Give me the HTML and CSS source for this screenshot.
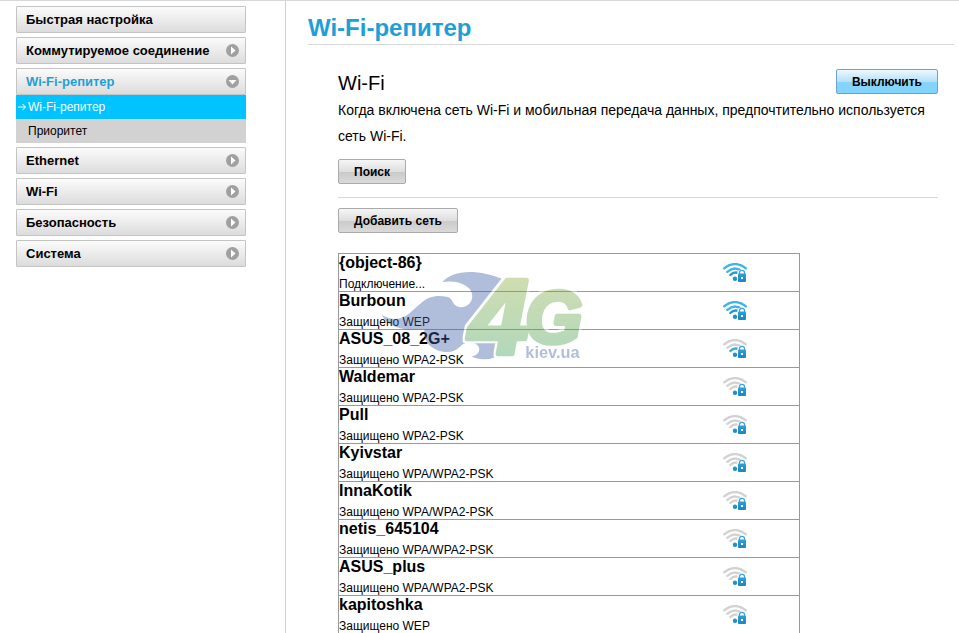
FILE: index.html
```html
<!DOCTYPE html>
<html lang="ru">
<head>
  <meta charset="UTF-8">
  <title>Wi-Fi-репитер</title>
  <link rel="stylesheet" href="styles.css">
</head>
<body>

  <!-- shared icons -->
  <svg class="sprite" width="0" height="0" aria-hidden="true">
    <defs>
      <linearGradient id="blue" gradientUnits="userSpaceOnUse" x1="0" y1="0" x2="0" y2="20">
        <stop offset="0" stop-color="#4fc0f0"/>
        <stop offset="1" stop-color="#1583c0"/>
      </linearGradient>
    </defs>
    <symbol id="arrow-right" viewBox="0 0 13 13">
      <circle cx="6.5" cy="6.5" r="6.5" fill="#a0a0a0"/>
      <path d="M5 2.5v8L9.500 6.5z" fill="#fff"/>
    </symbol>
    <symbol id="arrow-down" viewBox="0 0 13 13">
      <circle cx="6.5" cy="6.5" r="6.5" fill="#a0a0a0"/>
      <path d="M2.5 5h8L6.5 9.500z" fill="#fff"/>
    </symbol>
    <symbol id="signal" viewBox="0 0 24 20">
      <path class="arc arc-3" d="M1.3 5.200Q12 -3 22.7 5.200"/>
      <path class="arc arc-2" d="M4.300 8.800Q12 2.400 19.700 8.800"/>
      <path class="arc arc-1" d="M7.300 12Q11.500 7.800 16.500 10.500"/>
      <circle cx="12" cy="15.700" r="2.200" fill="url(#blue)"/>
      <path d="M14.300 11V10a4.700 3.500 0 0 1 9.400 0V20H14.300z" fill="#fff"/>
      <path d="M16.400 12V10a2.600 2.600 0 0 1 5.200 0V12" fill="none" stroke="#3aa5dc" stroke-width="1.200"/>
      <rect x="15" y="10.500" width="8" height="8.500" rx="1" fill="url(#blue)"/>
      <rect x="18" y="14" width="2" height="2" fill="#fff"/>
    </symbol>
  </svg>

  <div class="page">
    <nav class="sidebar">
      <a class="menu-item" href="#">Быстрая настройка</a>
      <a class="menu-item" href="#">Коммутируемое соединение <svg><use href="#arrow-right"/></svg></a>
      <div class="menu-group">
        <a class="menu-item open" href="#">Wi-Fi-репитер <svg><use href="#arrow-down"/></svg></a>
        <a class="submenu-item active" href="#"><svg viewBox="0 0 9 8"><path d="M0 4h7.500M4.500 1l3 3-3 3" fill="none" stroke="#fff"/></svg>Wi-Fi-репитер</a>
        <a class="submenu-item" href="#">Приоритет</a>
      </div>
      <a class="menu-item" href="#">Ethernet <svg><use href="#arrow-right"/></svg></a>
      <a class="menu-item" href="#">Wi-Fi <svg><use href="#arrow-right"/></svg></a>
      <a class="menu-item" href="#">Безопасность <svg><use href="#arrow-right"/></svg></a>
      <a class="menu-item" href="#">Система <svg><use href="#arrow-right"/></svg></a>
    </nav>

    <main class="content">
      <h1>Wi-Fi-репитер</h1>

      <section class="panel">
        <div class="panel-head">
          <h2>Wi-Fi</h2>
          <button class="btn btn-blue" type="button">Выключить</button>
        </div>
        <p>Когда включена сеть Wi-Fi и мобильная передача данных, предпочтительно используется сеть Wi-Fi.</p>
        <button class="btn" type="button">Поиск</button>
        <hr>
        <button class="btn" type="button">Добавить сеть</button>

        <div class="networks-wrap">
          <table class="networks">
            <tbody>
              <tr>
                <td><strong>{object-86}</strong><span>Подключение...</span></td>
                <td class="level level-3"><svg><use href="#signal"/></svg></td>
              </tr>
              <tr>
                <td><strong>Burboun</strong><span>Защищено WEP</span></td>
                <td class="level level-3"><svg><use href="#signal"/></svg></td>
              </tr>
              <tr>
                <td><strong>ASUS_08_2G+</strong><span>Защищено WPA2-PSK</span></td>
                <td class="level level-1"><svg><use href="#signal"/></svg></td>
              </tr>
              <tr>
                <td><strong>Waldemar</strong><span>Защищено WPA2-PSK</span></td>
                <td class="level"><svg><use href="#signal"/></svg></td>
              </tr>
              <tr>
                <td><strong>Pull</strong><span>Защищено WPA2-PSK</span></td>
                <td class="level"><svg><use href="#signal"/></svg></td>
              </tr>
              <tr>
                <td><strong>Kyivstar</strong><span>Защищено WPA/WPA2-PSK</span></td>
                <td class="level"><svg><use href="#signal"/></svg></td>
              </tr>
              <tr>
                <td><strong>InnaKotik</strong><span>Защищено WPA/WPA2-PSK</span></td>
                <td class="level"><svg><use href="#signal"/></svg></td>
              </tr>
              <tr>
                <td><strong>netis_645104</strong><span>Защищено WPA/WPA2-PSK</span></td>
                <td class="level"><svg><use href="#signal"/></svg></td>
              </tr>
              <tr>
                <td><strong>ASUS_plus</strong><span>Защищено WPA/WPA2-PSK</span></td>
                <td class="level"><svg><use href="#signal"/></svg></td>
              </tr>
              <tr>
                <td><strong>kapitoshka</strong><span>Защищено WEP</span></td>
                <td class="level"><svg><use href="#signal"/></svg></td>
              </tr>
            </tbody>
          </table>

          <svg class="watermark" viewBox="150 210 618 288">
            <defs>
              <linearGradient id="leaf" gradientUnits="userSpaceOnUse" x1="0" y1="235" x2="0" y2="470">
                <stop offset="0" stop-color="#8aac3e"/>
                <stop offset="1" stop-color="#3ea058"/>
              </linearGradient>
              <!-- white edge round the digits -->
              <filter id="edge" color-interpolation-filters="sRGB">
                <feMorphology in="SourceAlpha" operator="dilate" radius="6" result="fat"/>
                <feFlood flood-color="#fff"/>
                <feComposite in2="fat" operator="in" result="border"/>
                <feMerge>
                  <feMergeNode in="border"/>
                  <feMergeNode in="SourceGraphic"/>
                </feMerge>
              </filter>
            </defs>
            <path fill="#3e5fa8" d="M337 246C370 210 440 205 525 240L500 340L420 365C408 385 410 410 435 418L512 425C518 465 490 492 424 470C455 466 458 430 420 427C390 425 390 460 343 456C300 450 280 425 283 388C235 392 180 390 155 345C215 378 240 335 270 312C295 288 320 285 350 290C370 292 365 318 390 322C425 322 435 290 420 268C405 250 375 240 337 246Z"/>
            <g filter="url(#edge)">
              <text class="mark" x="416" y="463" font-size="325">4</text>
              <text class="mark" x="586" y="430" font-size="220">G</text>
            </g>
            <text class="mark-site" x="586" y="474" font-size="49">kiev.ua</text>
          </svg>
        </div>
      </section>
    </main>
  </div>

</body>
</html>
```
FILE: styles.css
```css
body {
  margin: 0;
  font-family: "Liberation Sans", Arial, sans-serif;
  background: #fff;
  color: #000;
  border-top: 1px solid #d7d7dc;
  height: 100vh;
  box-sizing: border-box;
  overflow: hidden;
}

.sprite {
  position: absolute;
}

.page {
  display: flex;
  height: 100%;
}

/* left menu */
.sidebar {
  flex: none;
  width: 230px;
  padding: 5px 39px 0 16px;
  border-right: 1px solid #d0d0d0;
  display: flex;
  flex-direction: column;
  gap: 4px;
}

.menu-item {
  display: flex;
  align-items: center;
  justify-content: space-between;
  height: 25px;
  padding: 0 6px 0 9px;
  border: 1px solid #c4c4c4;
  border-radius: 1px;
  background: linear-gradient(#fbfbfb, #dcdcdc);
  color: #000;
  font-size: 13px;
  font-weight: bold;
  text-decoration: none;
}

.menu-item.open {
  color: #1ea0d7;
}

.menu-item svg {
  width: 13px;
  height: 13px;
}

.submenu-item {
  display: flex;
  align-items: center;
  height: 24px;
  padding-left: 12px;
  background: #d2d2d2;
  color: #000;
  font-size: 12px;
  text-decoration: none;
}

.submenu-item.active {
  padding-left: 2px;
  background: #00c3ff;
  color: #fff;
}

.submenu-item svg {
  width: 9px;
  height: 8px;
  margin-right: 1px;
}

/* main column */
.content {
  flex: 1;
  min-width: 0;
  padding: 11px 5px 0 22px;
}

h1 {
  margin: 0;
  padding-bottom: 1px;
  border-bottom: 1px solid #d7d7d7;
  color: #1ea0d7;
  font-size: 24px;
  line-height: 31px;
}

.panel {
  padding: 24px 16px 0 30px;
}

.panel-head {
  display: flex;
  align-items: flex-start;
  justify-content: space-between;
}

h2 {
  margin: 0;
  font-size: 20px;
  font-weight: normal;
  line-height: 28px;
}

p {
  margin: 0 0 10px;
  font-size: 14px;
  line-height: 26px;
}

hr {
  margin: 13px 0 10px;
  border: 0;
  border-top: 1px solid #d7d7d7;
}

.btn {
  display: block;
  height: 25px;
  padding: 0 15px;
  border: 1px solid #aaa;
  border-radius: 2px;
  background: linear-gradient(#f6f6f6, #dedede 50%, #cacaca 52%, #dadada);
  color: #000;
  font-family: inherit;
  font-size: 12px;
  font-weight: bold;
}

.btn-blue {
  border-color: #6aa5d2;
  background: linear-gradient(#eef8fe, #b4e0f8 50%, #86d4fa 52%, #80d4fc);
}

/* network list */
.networks-wrap {
  position: relative;
  margin-top: 20px;
}

.networks {
  width: 77%;
  border-collapse: collapse;
}

.networks td {
  height: 37px;
  padding: 0;
  border-top: 1px solid #999;
  border-bottom: 1px solid #999;
}

.networks td:first-child {
  border-left: 1px solid #999;
}

.networks td:last-child {
  border-right: 1px solid #999;
}

.networks strong {
  display: block;
  font-size: 16px;
  line-height: 18px;
}

.networks span {
  display: block;
  padding-top: 5px;
  font-size: 12px;
  line-height: 14px;
}

.networks .level {
  width: 28%;
}

.level svg {
  display: block;
  width: 24px;
  height: 20px;
  margin: 0 auto;
}

.arc {
  fill: none;
  stroke-width: 2.4;
  stroke-linecap: round;
}

.arc-1 {
  stroke: var(--near, #d2d2d2);
}

.arc-2,
.arc-3 {
  stroke: var(--far, #d2d2d2);
}

.level-1 {
  --near: #37aae1;
}

.level-3 {
  --near: #2896d2;
  --far: #41b4e6;
}

.watermark {
  position: absolute;
  left: 42px;
  top: 17px;
  width: 206px;
  height: 96px;
  overflow: visible;
  opacity: 0.4;
  pointer-events: none;
}

.mark {
  font-weight: bold;
  font-style: italic;
  fill: url(#leaf);
  stroke: url(#leaf);
  stroke-width: 14;
  stroke-linejoin: round;
}

.mark-site {
  font-weight: bold;
  fill: #3e5fa8;
}
```
